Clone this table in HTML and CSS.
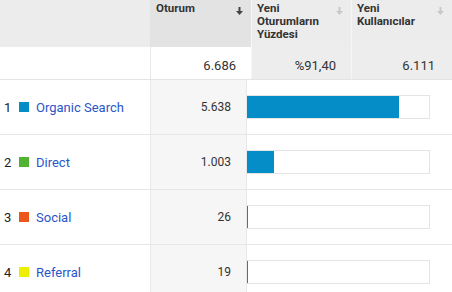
FILE: index.html
```html
<!DOCTYPE html>
<html>
<head>
<meta charset="utf-8">
<link rel="stylesheet" href="styles.css">
</head>
<body>
<div class="table">
  <div class="head">
    <div class="hcell blank"></div>
    <div class="hcell sorted"><span class="htext">Oturum</span><svg class="arrow dark" width="7" height="8" viewBox="0 0 7 8"><rect x="2.5" y="0" width="2" height="4"/><polygon points="0,4 7,4 3.5,8"/></svg></div>
    <div class="hcell"><span class="htext">Yeni<br>Oturumların<br>Yüzdesi</span><svg class="arrow light" width="7" height="8" viewBox="0 0 7 8"><rect x="2.5" y="0" width="2" height="4"/><polygon points="0,4 7,4 3.5,8"/></svg></div>
    <div class="hcell"><span class="htext">Yeni<br>Kullanıcılar</span><svg class="arrow light" width="7" height="8" viewBox="0 0 7 8"><rect x="2.5" y="0" width="2" height="4"/><polygon points="0,4 7,4 3.5,8"/></svg></div>
  </div>
  <div class="total">
    <div class="tcell blank"></div>
    <div class="tcell white">6.686</div>
    <div class="tcell grey">%91,40</div>
    <div class="tcell grey last">6.111</div>
  </div>
  <div class="row">
    <div class="label"><span class="idx">1</span><span class="sq blue"></span><a class="link">Organic Search</a></div>
    <div class="num">5.638</div>
    <div class="barcell"><div class="bar"><div class="fill" style="width:152px"></div></div></div>
  </div>
  <div class="row">
    <div class="label"><span class="idx">2</span><span class="sq green"></span><a class="link">Direct</a></div>
    <div class="num">1.003</div>
    <div class="barcell"><div class="bar"><div class="fill" style="width:27px"></div></div></div>
  </div>
  <div class="row">
    <div class="label"><span class="idx">3</span><span class="sq orange"></span><a class="link">Social</a></div>
    <div class="num">26</div>
    <div class="barcell"><div class="bar"><div class="fill" style="width:1px"></div></div></div>
  </div>
  <div class="row">
    <div class="label"><span class="idx">4</span><span class="sq yellow"></span><a class="link">Referral</a></div>
    <div class="num">19</div>
    <div class="barcell"><div class="bar"><div class="fill" style="width:1px"></div></div></div>
  </div>
</div>
</body>
</html>
```
FILE: styles.css
```css
html, body {
  margin: 0;
  padding: 0;
  background: #fff;
}
body {
  font-family: Roboto, "Liberation Sans", Arial, sans-serif;
  color: #222;
  width: 452px;
  height: 292px;
  overflow: hidden;
}
.table {
  width: 452px;
}
.head {
  display: grid;
  grid-template-columns: 150px 101px 100px 101px;
  height: 47px;
  background: #ececec;
}
.hcell {
  display: flex;
  justify-content: space-between;
  align-items: flex-start;
  padding: 2px 8px 0 5px;
  border-left: 1px solid #f6f6f6;
  box-sizing: border-box;
}
.hcell.blank {
  border-left: none;
}
.hcell.sorted {
  background: #e3e3e3;
  border-left: none;
  padding-left: 6px;
}
.htext {
  font-size: 11.5px;
  font-weight: bold;
  line-height: 13px;
  color: #333;
}
.arrow {
  margin-top: 5px;
}
.arrow.dark { fill: #444; }
.arrow.light { fill: #c8c8c8; }
.total {
  display: grid;
  grid-template-columns: 150px 101px 100px 101px;
  height: 33px;
  border-bottom: 1px solid #e4e4e4;
  box-sizing: border-box;
}
.tcell {
  display: flex;
  justify-content: flex-end;
  align-items: center;
  padding: 4px 15px 0 0;
  font-size: 13px;
  color: #333;
  box-sizing: border-box;
}
.tcell.white {
  background: #fff;
  border-left: 1px solid #e8e8e8;
}
.tcell.grey {
  background: #ededed;
  border-left: 1px solid #f6f6f6;
}
.tcell.last {
  padding-right: 17px;
}
.row {
  display: grid;
  grid-template-columns: 150px 97px 205px;
  height: 55px;
  border-bottom: 1px solid #e6e6e6;
  box-sizing: border-box;
}
.label {
  display: flex;
  align-items: center;
  padding-left: 4px;
  font-size: 13px;
}
.idx {
  width: 15px;
  color: #222;
}
.sq {
  width: 10px;
  height: 10px;
  margin-right: 7px;
}
.blue { background: #058dc7; }
.green { background: #50b432; }
.orange { background: #ed561b; }
.yellow { background: #edef00; }
.link {
  color: #2a56c9;
}
.num {
  display: flex;
  justify-content: flex-end;
  align-items: center;
  padding-right: 15px;
  background: #f6f6f6;
  border-left: 1px solid #e8e8e8;
  border-right: 1px solid #e8e8e8;
  font-size: 12px;
  color: #333;
}
.barcell {
  display: flex;
  align-items: center;
}
.bar {
  width: 183px;
  height: 24px;
  border: 1px solid #e4e4e4;
  border-left: none;
  box-sizing: border-box;
  display: flex;
  background: #fff;
}
.fill {
  background: #058dc7;
  height: 100%;
}
```
